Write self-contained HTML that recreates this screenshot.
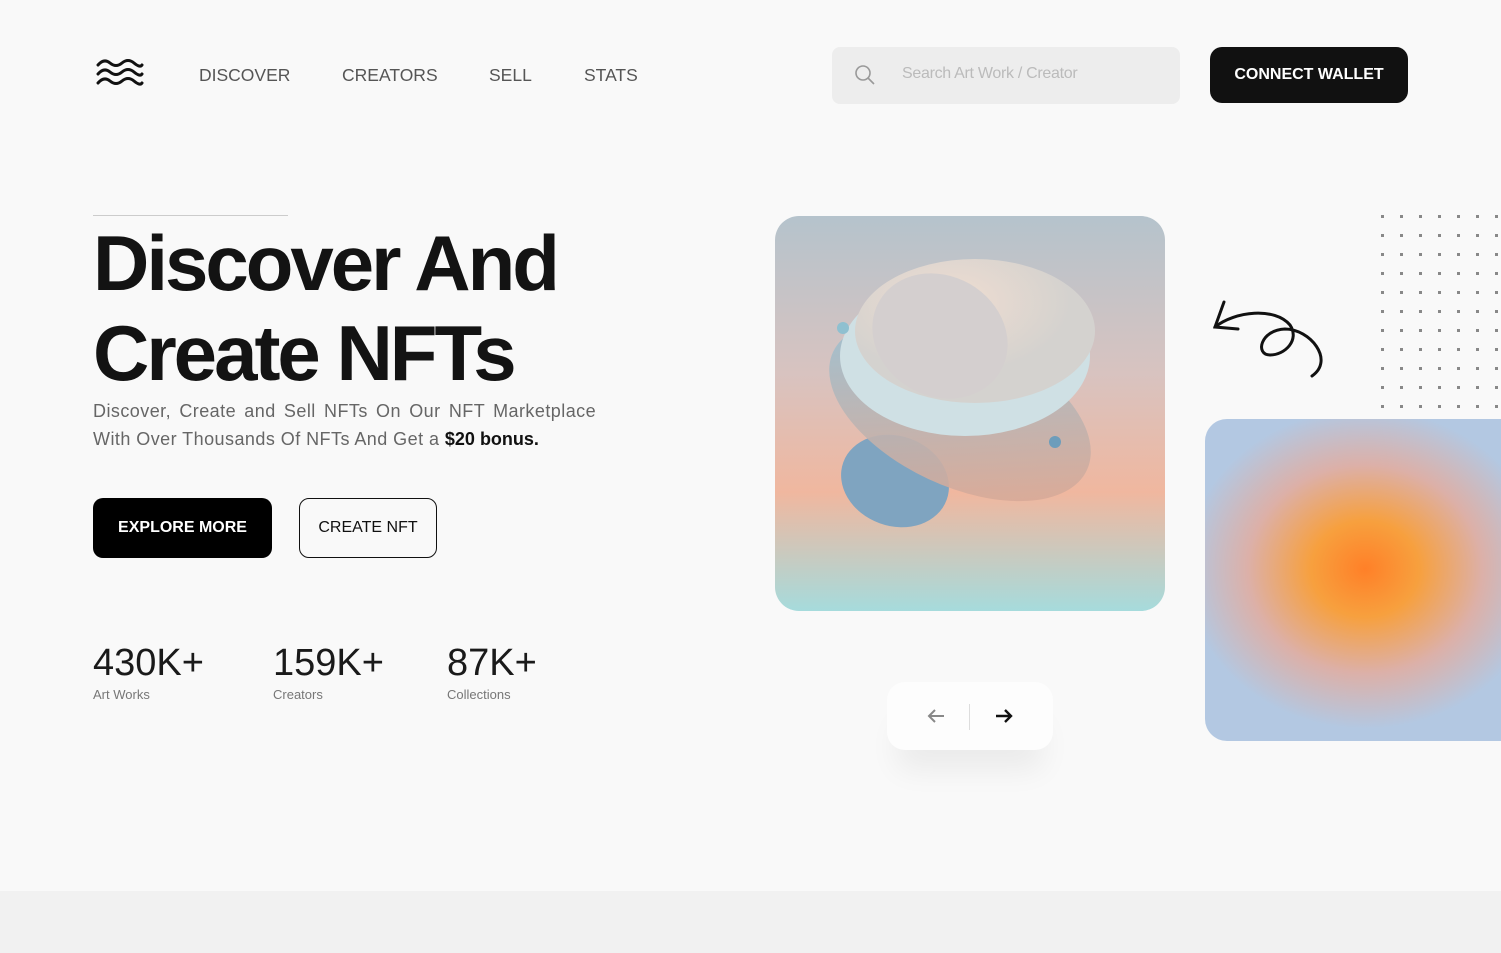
<!DOCTYPE html>
<html><head><meta charset="utf-8"><style>
*{margin:0;padding:0;box-sizing:border-box}
body{width:1501px;height:953px;background:#f9f9f9;font-family:"Liberation Sans",sans-serif;position:relative;overflow:hidden}
.abs{position:absolute}
.nav{font-size:17.5px;color:#555;top:65px}
.search{left:832px;top:47px;width:348px;height:57px;background:#ededed;border-radius:8px}
.search span{position:absolute;left:70px;top:18px;font-size:16px;color:#bbb;letter-spacing:-0.3px}
.cw{left:1210px;top:47px;width:198px;height:56px;background:#111;border-radius:12px;color:#fff;font-weight:bold;font-size:16px;text-align:center;line-height:56px}
h1{position:absolute;left:93px;top:218px;font-size:78px;line-height:90px;font-weight:bold;color:#131313;letter-spacing:-3px}
.sub{left:93px;top:397px;font-size:18px;line-height:28px;color:#666;width:520px;letter-spacing:0.45px;white-space:nowrap}
.sub b{color:#111;letter-spacing:0}
.b1{left:93px;top:498px;width:179px;height:60px;background:#000;color:#fff;border-radius:10px;font-weight:bold;font-size:16px;text-align:center;line-height:60px}
.b2{left:299px;top:498px;width:138px;height:60px;border:1px solid #111;color:#111;border-radius:10px;font-size:16px;text-align:center;line-height:58px}
.n{font-size:38px;color:#1a1a1a;top:642px}
.l{font-size:13px;color:#777;top:687px}
.card{left:775px;top:216px;width:390px;height:395px;border-radius:24px;overflow:hidden;background:linear-gradient(180deg,#b5c3cc 0%,#d8c3c0 40%,#f0b79f 70%,#a6dbdc 100%)}
.card2{left:1205px;top:419px;width:320px;height:322px;border-radius:22px;background:radial-gradient(ellipse 180px 160px at 160px 150px,#ff8028 0%,#f7a03e 30%,#dcb0a8 65%,#b3c8e2 100%)}
.pager{left:887px;top:682px;width:166px;height:68px;background:#fdfdfd;border-radius:18px;box-shadow:0 30px 30px -10px rgba(0,0,0,0.06)}
</style></head><body>
<svg class="abs" style="left:96px;top:57px" width="48" height="30" viewBox="0 0 48 30" fill="none" stroke="#111" stroke-width="3" stroke-linecap="round">
<path d="M2 8 Q8 1 14 6 T26 6 T38 6 T46 8"/><path d="M2 17 Q8 10 14 15 T26 15 T38 15 T46 17"/><path d="M2 26 Q8 19 14 24 T26 24 T38 24 T46 26"/></svg>
<div class="abs nav" style="left:199px">DISCOVER</div>
<div class="abs nav" style="left:342px">CREATORS</div>
<div class="abs nav" style="left:489px">SELL</div>
<div class="abs nav" style="left:584px">STATS</div>
<div class="abs search"><svg class="abs" style="left:22px;top:17px" width="22" height="22" viewBox="0 0 22 22" fill="none" stroke="#999" stroke-width="1.6"><circle cx="9" cy="9" r="7"/><path d="M14 14l6 6"/></svg><span>Search Art Work / Creator</span></div>
<div class="abs cw">CONNECT WALLET</div>
<div class="abs" style="left:93px;top:215px;width:195px;height:1px;background:#ccc"></div>
<h1>Discover And<br>Create NFTs</h1>
<div class="abs sub"><span style="word-spacing:2.8px">Discover, Create and Sell NFTs On Our NFT Marketplace</span><br>With Over Thousands Of NFTs And Get a <b>$20 bonus.</b></div>
<div class="abs b1">EXPLORE MORE</div>
<div class="abs b2">CREATE NFT</div>
<div class="abs n" style="left:93px">430K+</div><div class="abs l" style="left:93px">Art Works</div>
<div class="abs n" style="left:273px">159K+</div><div class="abs l" style="left:273px">Creators</div>
<div class="abs n" style="left:447px">87K+</div><div class="abs l" style="left:447px">Collections</div>
<div class="abs card">
<svg width="390" height="395" viewBox="0 0 390 395">
<defs><radialGradient id="g1" cx="0.4" cy="0.3"><stop offset="0" stop-color="#f0ddd0"/><stop offset="1" stop-color="#d4d2cf"/></radialGradient>
<linearGradient id="g2" x1="0" y1="0" x2="1" y2="1"><stop offset="0" stop-color="#8fc4dc"/><stop offset="1" stop-color="#e4a58c"/></linearGradient></defs>
<ellipse cx="120" cy="265" rx="55" ry="45" fill="#7fa4c0" transform="rotate(20 120 265)"/>
<ellipse cx="185" cy="195" rx="140" ry="75" fill="url(#g2)" transform="rotate(25 185 195)" opacity="0.9"/>
<ellipse cx="190" cy="140" rx="125" ry="80" fill="#cfe0e4"/>
<ellipse cx="200" cy="115" rx="120" ry="72" fill="url(#g1)"/>
<ellipse cx="165" cy="120" rx="70" ry="60" fill="#d4cfcf" transform="rotate(30 165 120)"/>
<circle cx="68" cy="112" r="6" fill="#8fc0d0"/><circle cx="280" cy="226" r="6" fill="#6d9dbb"/>
</svg></div>
<svg class="abs" style="left:1205px;top:295px" width="130" height="95" viewBox="0 0 130 95" fill="none" stroke="#111" stroke-width="3" stroke-linecap="round">
<path d="M10 32 C30 16 70 12 85 30 C95 45 80 60 65 60 C50 60 55 35 80 34 C105 34 130 65 107 81"/>
<path d="M19 7 L10 32 L33 34"/></svg>
<svg class="abs" style="left:1380px;top:214px" width="121" height="200">
<defs><pattern id="d" width="19" height="19" patternUnits="userSpaceOnUse"><rect x="1" y="1" width="3" height="3" fill="#888"/></pattern></defs>
<rect width="121" height="200" fill="url(#d)"/></svg>
<div class="abs card2"></div>
<div class="abs pager"><svg class="abs" style="left:40px;top:26px" width="20" height="16" viewBox="0 0 20 16" fill="none" stroke="#888" stroke-width="2"><path d="M2 8H17M8 2L2 8L8 14"/></svg>
<div class="abs" style="left:82px;top:22px;width:1px;height:26px;background:#ddd"></div>
<svg class="abs" style="left:107px;top:26px" width="20" height="16" viewBox="0 0 20 16" fill="none" stroke="#111" stroke-width="2.4"><path d="M2 8H17M11 2L17 8L11 14"/></svg></div>
<div class="abs" style="left:0;top:891px;width:1501px;height:62px;background:#f1f1f1"></div>
</body></html>
